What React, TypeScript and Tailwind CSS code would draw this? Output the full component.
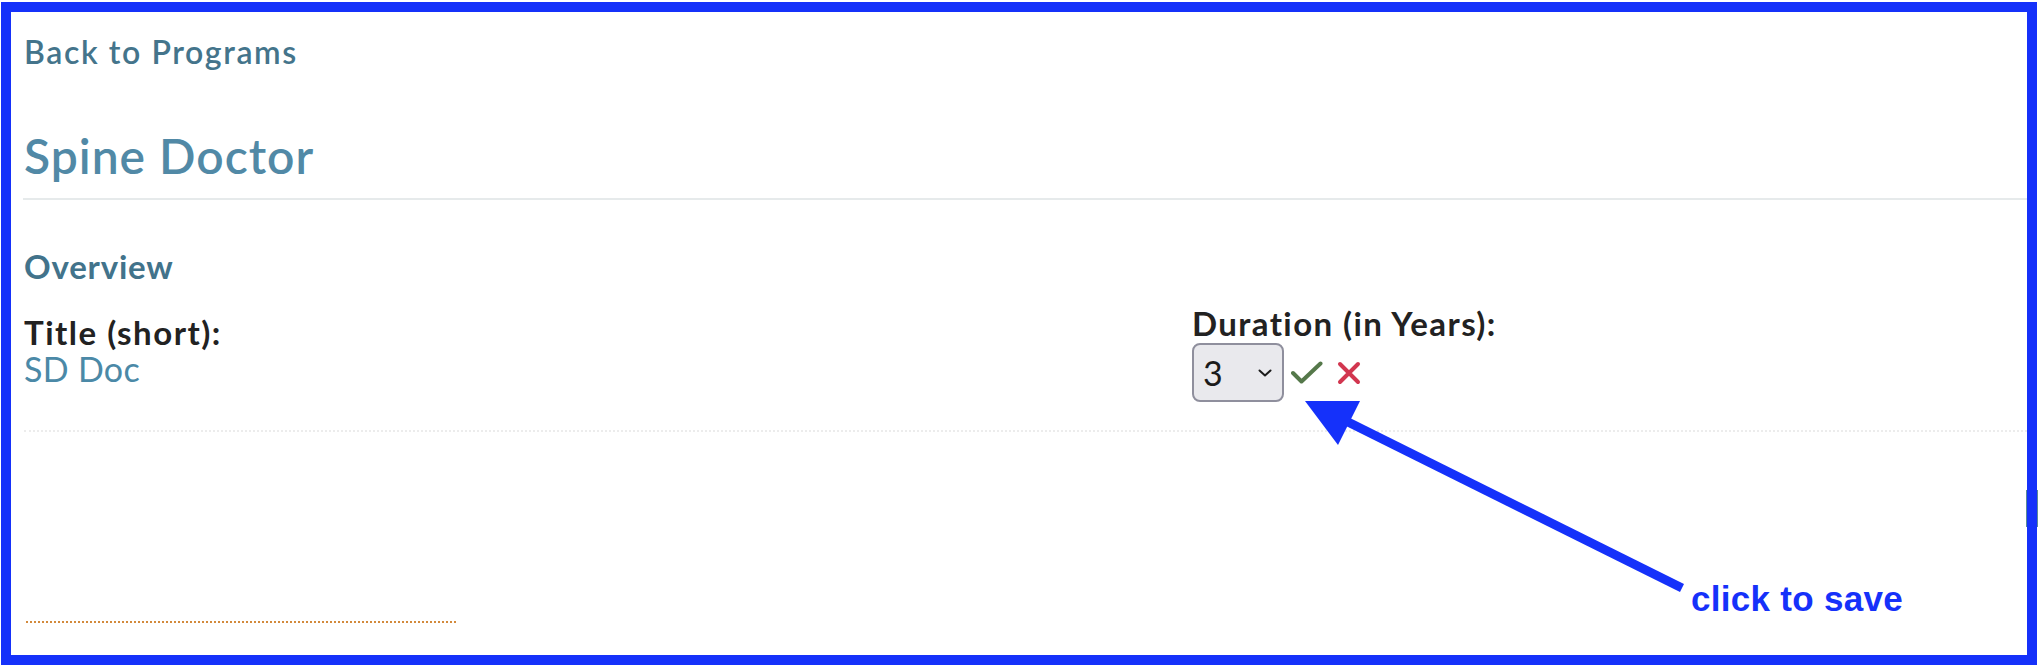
import React from 'react'

export default function App() {
  return (
    <div className="relative w-[2038px] h-[666px] bg-white pt-[2px] pl-[1px] overflow-hidden" style={{ fontFamily: 'Lato, "Noto Sans", sans-serif' }}>
      <div className="w-[2036px] h-[663px] border-[10px] border-[#1531fa]">
        <div className="pl-[12px] pt-[20px]">
          {/* Back link */}
          <a className="block pl-[1px] text-[32px] leading-[40px] font-semibold tracking-[1.6px] text-[#44748b]">Back to Programs</a>

          {/* Page title */}
          <div className="mt-[56px] pb-[14px] border-b-2 border-[#e6eaeb]">
            <h1 className="pl-[1px] text-[48px] leading-[56px] font-semibold tracking-[1px] text-[#5189a6]">Spine Doctor</h1>
          </div>

          {/* Overview section */}
          <div className="pl-[1px]">
            <h2 className="mt-[46px] text-[33px] leading-[40px] font-bold tracking-[0.8px] text-[#42738b]">Overview</h2>

            <div className="grid grid-cols-[1168px_1fr] items-start mt-[19px] pb-[28px] border-b-2 border-dotted border-[#ececec]">
              <div className="pt-[9px]">
                <div className="text-[33px] leading-[36px] font-bold tracking-[1.5px] text-[#222]">Title (short):</div>
                <div className="text-[34px] leading-[38px] tracking-[0.3px] text-[#4b89a7]">SD Doc</div>
              </div>
              <div>
                <div className="text-[33px] leading-[36px] font-bold tracking-[1.4px] text-[#222]">Duration (in Years):</div>
                <div className="flex items-center mt-[2px]">
                  <div className="flex items-center justify-between w-[92px] h-[59px] pl-[9px] pr-[10px] bg-[#e9e9ed] border-2 border-[#8f8f9d] rounded-[8px]">
                    <span className="text-[34px] leading-none text-[#1b1b1b]">3</span>
                    <svg width="14" height="8" viewBox="0 0 14 8" fill="none">
                      <path d="M1.5 1.5 L7 6.5 L12.5 1.5" stroke="#1b1b1b" strokeWidth="2" strokeLinecap="round" strokeLinejoin="round" />
                    </svg>
                  </div>
                  <button className="ml-[7px]" aria-label="save">
                    <svg width="32" height="24" viewBox="0 0 32 24" fill="none">
                      <path d="M2 12 L10.5 20.5 L29.5 2.5" stroke="#55784a" strokeWidth="4" strokeLinecap="round" strokeLinejoin="round" />
                    </svg>
                  </button>
                  <button className="ml-[14px]" aria-label="cancel">
                    <svg width="24" height="24" viewBox="0 0 24 24" fill="none">
                      <path d="M3 3 L21 21 M21 3 L3 21" stroke="#d2364f" strokeWidth="4" strokeLinecap="round" />
                    </svg>
                  </button>
                </div>
              </div>
            </div>

            {/* Footer divider */}
            <div className="mt-[189px] ml-[2px] w-[430px] border-t-2 border-dotted border-[#d38a3c]"></div>
          </div>
        </div>
      </div>

      {/* Right edge tab peeking behind the frame */}
      <div className="absolute left-[2026px] top-[490px] w-[1px] h-[37px] bg-[#5b8a96]"></div>
      <div className="absolute left-[2037px] top-[490px] w-[1px] h-[37px] bg-[#5b8a96]"></div>

      {/* Annotation arrow */}
      <svg className="absolute left-0 top-0 pointer-events-none" width="2038" height="666" viewBox="0 0 2038 666">
        <line x1="1346" y1="421" x2="1682" y2="588" stroke="#1531fa" strokeWidth="9" />
        <polygon points="1305,401 1360,401 1338,445" fill="#1531fa" />
      </svg>
      <div
        className="absolute left-[1691px] top-[579px] text-[35px] leading-[40px] font-bold tracking-[0.3px] text-[#1531fa]"
        style={{ fontFamily: '"Liberation Sans", Arial, sans-serif' }}
      >
        click to save
      </div>
    </div>
  )
}
